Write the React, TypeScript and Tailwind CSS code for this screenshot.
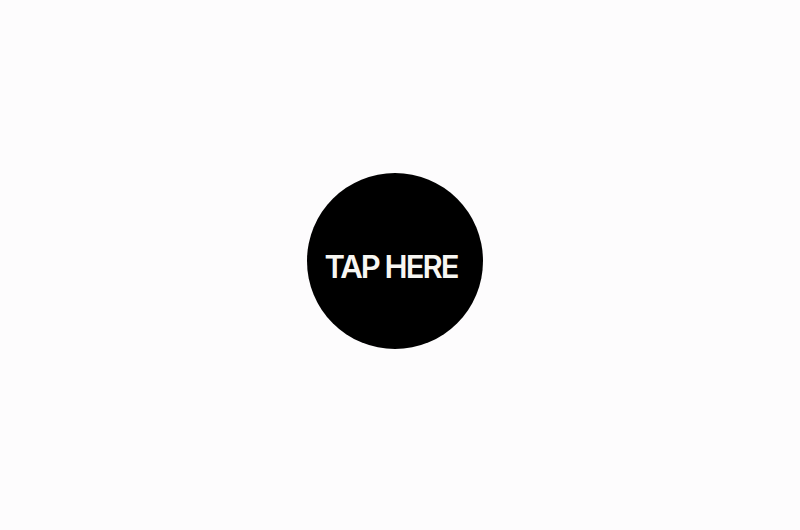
export default function App() {
  return (
    <div className="flex h-[530px] w-[800px] items-center justify-center bg-[#fdfcfd] font-['Inter',sans-serif]">
      <button className="ml-[-10px] mt-[-8px] flex h-[176px] w-[176px] items-center justify-center rounded-full bg-black">
        <span className="ml-[-8px] mt-[10px] text-[31px] font-semibold leading-none tracking-[-2px] text-[#f7f6f2]">TAP HERE</span>
      </button>
    </div>
  )
}
